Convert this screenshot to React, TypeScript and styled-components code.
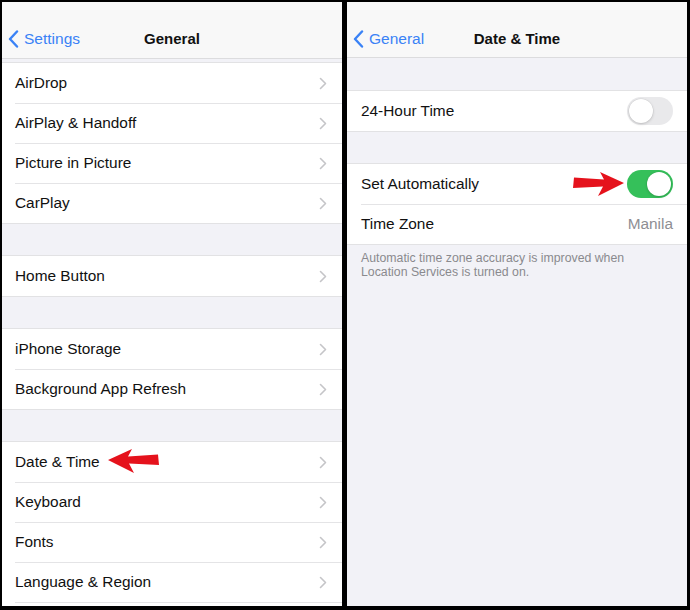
import React from "react";
import styled, { createGlobalStyle } from "styled-components";

const Global = createGlobalStyle`
  html, body { margin: 0; padding: 0; background: #000; }
  body { font-family: "Liberation Sans", Arial, sans-serif; }
  * { box-sizing: border-box; }
`;

const Frame = styled.div`
  width: 690px;
  height: 610px;
  background: #000;
  display: flex;
  gap: 5px;
  padding: 2px 3px 4px 2px;
`;

const Panel = styled.div`
  width: 340px;
  height: 604px;
  background: #f2f2f7;
  display: flex;
  flex-direction: column;
  overflow: hidden;
`;

const NavBar = styled.div<{ $h: number }>`
  height: ${(p) => p.$h}px;
  flex: none;
  background: #f8f8f8;
  border-bottom: 1px solid #dcdcde;
  display: grid;
  grid-template-columns: 1fr auto 1fr;
  align-items: start;
  padding-top: 27px;
`;

const Back = styled.div`
  display: flex;
  align-items: center;
  gap: 5px;
  padding-left: 6px;
  color: #3a82f6;
  font-size: 15.5px;
  line-height: 20px;
`;

const Title = styled.div`
  font-weight: bold;
  font-size: 15px;
  line-height: 20px;
  color: #111;
`;

const Spacer = styled.div<{ $h: number }>`
  height: ${(p) => p.$h}px;
  flex: none;
`;

const Group = styled.div`
  background: #fff;
  border-top: 1px solid #e2e2e4;
  border-bottom: 1px solid #e2e2e4;
  flex: none;
`;

const Row = styled.div<{ $pl: number; $pr: number }>`
  position: relative;
  height: 40px;
  display: flex;
  align-items: center;
  justify-content: space-between;
  padding: 0 ${(p) => p.$pr}px 0 ${(p) => p.$pl}px;
  font-size: 15.4px;
  color: #111;
  & + &::before {
    content: "";
    position: absolute;
    top: 0;
    left: ${(p) => p.$pl}px;
    right: 0;
    height: 1px;
    background: #e4e4e6;
  }
`;

const Value = styled.span`
  color: #8e8e93;
  font-size: 15.4px;
`;

const Footer = styled.div`
  padding: 6px 14px 0 14px;
  font-size: 12.3px;
  line-height: 14px;
  color: #8a8a8e;
`;

const Toggle = styled.div<{ $on: boolean }>`
  width: 46px;
  height: 28px;
  border-radius: 14px;
  background: ${(p) => (p.$on ? "#35c05a" : "#e9e9eb")};
  padding: 2px;
  display: flex;
  justify-content: ${(p) => (p.$on ? "flex-end" : "flex-start")};
`;

const Knob = styled.div`
  width: 24px;
  height: 24px;
  border-radius: 50%;
  background: #fff;
  box-shadow: 0 1px 3px rgba(0, 0, 0, 0.18), 0 0 0 0.5px rgba(0, 0, 0, 0.06);
`;

const ArrowMark = styled.svg<{ $left: number; $top: number }>`
  position: absolute;
  left: ${(p) => p.$left}px;
  top: ${(p) => p.$top}px;
`;

const Chevron = () => (
  <svg width="8" height="13" viewBox="0 0 8 13">
    <path d="M1.5 1.5 L6.5 6.5 L1.5 11.5" fill="none" stroke="#c5c5c8" strokeWidth="1.6" strokeLinecap="round" strokeLinejoin="round" />
  </svg>
);

const BackChevron = () => (
  <svg width="11" height="18" viewBox="0 0 11 18">
    <path d="M9 1.5 L2 9 L9 16.5" fill="none" stroke="#3a82f6" strokeWidth="2.4" strokeLinecap="round" strokeLinejoin="round" />
  </svg>
);

const RedArrow = ({ left, top, dir }: { left: number; top: number; dir: "left" | "right" }) => (
  <ArrowMark $left={left} $top={top} width="52" height="26" viewBox="0 0 52 26">
    <g transform={dir === "right" ? "translate(52,0) scale(-1,1)" : undefined}>
      <polygon points="0,12 24,1 20,8.5 50,6.5 51,17 21,15.5 26,25" fill="#e5121c" />
    </g>
  </ArrowMark>
);

const leftGroups: string[][] = [
  ["AirDrop", "AirPlay & Handoff", "Picture in Picture", "CarPlay"],
  ["Home Button"],
  ["iPhone Storage", "Background App Refresh"],
  ["Date & Time", "Keyboard", "Fonts", "Language & Region", ""],
];

export default function App() {
  return (
    <>
      <Global />
      <Frame>
        <Panel>
          <NavBar $h={57}>
            <Back>
              <BackChevron />
              <span>Settings</span>
            </Back>
            <Title>General</Title>
            <div />
          </NavBar>
          <Spacer $h={3} />
          {leftGroups.map((g, gi) => (
            <React.Fragment key={gi}>
              {gi > 0 && <Spacer $h={31} />}
              <Group>
                {g.map((label, i) => (
                  <Row key={i} $pl={13} $pr={15}>
                    <span>{label}</span>
                    {label && <Chevron />}
                    {label === "Date & Time" && <RedArrow left={106} top={6} dir="left" />}
                  </Row>
                ))}
              </Group>
            </React.Fragment>
          ))}
        </Panel>
        <Panel>
          <NavBar $h={56}>
            <Back>
              <BackChevron />
              <span>General</span>
            </Back>
            <Title>Date &amp; Time</Title>
            <div />
          </NavBar>
          <Spacer $h={32} />
          <Group>
            <Row $pl={14} $pr={14}>
              <span>24-Hour Time</span>
              <Toggle $on={false}>
                <Knob />
              </Toggle>
            </Row>
          </Group>
          <Spacer $h={31} />
          <Group>
            <Row $pl={14} $pr={14}>
              <span>Set Automatically</span>
              <Toggle $on={true}>
                <Knob />
              </Toggle>
              <RedArrow left={225} top={7} dir="right" />
            </Row>
            <Row $pl={14} $pr={14}>
              <span>Time Zone</span>
              <Value>Manila</Value>
            </Row>
          </Group>
          <Footer>
            Automatic time zone accuracy is improved when
            <br />
            Location Services is turned on.
          </Footer>
        </Panel>
      </Frame>
    </>
  );
}
